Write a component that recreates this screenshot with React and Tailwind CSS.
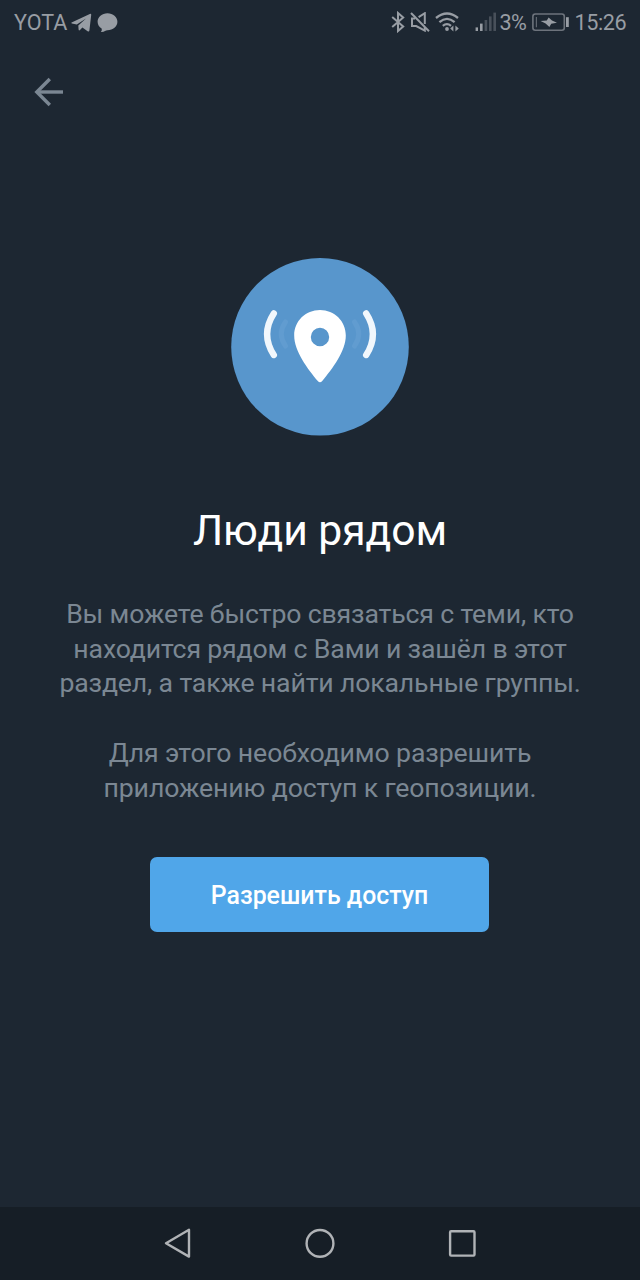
import React from 'react';

const TelegramIcon = () => (
  <svg width="21" height="20" viewBox="0 0 21 20" fill="currentColor">
    <path d="M0.6 9.4 L18.8 1 Q20.4 0.4 20.2 2 L18.4 17.6 Q18 19.2 16.6 18.2 L11.4 14.4 L9 17 Q7.8 18 7.6 16.4 L7.3 12.4 L15 5.6 L5.8 11.6 L0.8 10.4 Q-0.2 9.8 0.6 9.4 Z" />
  </svg>
);

const ChatIcon = () => (
  <svg width="21" height="20" viewBox="0 0 21 20" fill="currentColor">
    <path d="M10.5 0.3 C16 0.3 20.4 4 20.4 8.8 C20.4 13.6 16 17.2 10.5 17.2 C9.6 17.2 8.8 17.5 8 18 C6.9 18.8 5.6 19.2 3.8 19 C4.8 18.2 5 17 4.6 15.6 C2.2 14 0.6 11.7 0.6 8.8 C0.6 4 5 0.3 10.5 0.3 Z" />
  </svg>
);

const BluetoothIcon = () => (
  <svg width="14" height="22" viewBox="0 0 14 22" fill="none" stroke="currentColor" strokeWidth="2">
    <path d="M1.2 6 L12.2 15.4 L7 20 V2 L12.2 6.6 L1.2 16" />
  </svg>
);

const MuteIcon = () => (
  <svg width="20" height="20" viewBox="0 0 20 20" fill="none" stroke="currentColor" strokeWidth="2">
    <path d="M1 1 L19 19.2" />
    <path d="M5 6.4 H2 V14 H6.2 L14.8 18.6 V15" />
    <path d="M8.6 5.2 L14.8 1.2 V12" />
  </svg>
);

const WifiIcon = () => (
  <svg width="25" height="20" viewBox="0 0 25 20" fill="none" stroke="currentColor" strokeWidth="2.3">
    <path d="M1 6 Q12 -3 23 6" />
    <path d="M4.4 10.2 Q12 3.6 19.6 10.2" />
    <path d="M7.8 13.8 Q12 10.4 16 13.8" />
    <circle cx="12" cy="17" r="1.9" fill="currentColor" stroke="none" />
    <path d="M18.4 13.6 V19.4 L15.2 16.5 Z M20.4 13.6 V19.4 L23.8 16.5 Z" fill="currentColor" stroke="none" />
  </svg>
);

const SignalIcon = () => (
  <svg width="22" height="20" viewBox="0 0 22 20" fill="currentColor">
    <rect x="0.6" y="15.4" width="2.4" height="3.6" />
    <rect x="5" y="11.6" width="2.6" height="7.4" />
    <g opacity="0.35">
      <rect x="9.6" y="8" width="2.6" height="11" />
      <rect x="14" y="4.4" width="2.6" height="14.6" />
      <rect x="18.4" y="0.6" width="2.6" height="18.4" />
    </g>
  </svg>
);

const BatteryIcon = () => (
  <svg width="37" height="19" viewBox="0 0 37 19" fill="none">
    <rect x="0.9" y="1" width="31.4" height="16.2" rx="2.4" stroke="currentColor" strokeWidth="1.6" opacity="0.65" />
    <path d="M4.4 4 V14.2" stroke="currentColor" strokeWidth="1.2" opacity="0.55" />
    <path d="M34 4.2 H36.8 V14 H34 Z" fill="currentColor" />
    <path d="M8.6 8 L14.8 7.4 L16.6 4.4 L20 7.6 L25 9.8 L19.2 10.8 L17.4 14 L13.6 10.6 Z" fill="currentColor" />
  </svg>
);

function StatusBar() {
  return (
    <header className="flex h-11 items-center justify-between pl-3.5 pr-[13.5px] text-[21.6px] leading-none text-[#989da4]">
      <div className="flex items-center">
        <span className="w-[57px] pt-px">YOTA</span>
        <div className="pt-px"><TelegramIcon /></div>
        <div className="ml-[5px] pt-px"><ChatIcon /></div>
      </div>
      <div className="flex items-center">
        <BluetoothIcon />
        <div className="ml-[5px]"><MuteIcon /></div>
        <div className="ml-[5px]"><WifiIcon /></div>
        <div className="ml-[15px]"><SignalIcon /></div>
        <span className="ml-[3px] w-8 pt-px tracking-[-0.7px]">3%</span>
        <BatteryIcon />
        <span className="ml-1.5 w-[52px] pt-px tracking-[-0.4px]">15:26</span>
      </div>
    </header>
  );
}

function NearbyIcon() {
  return (
    <svg className="size-[178px]" viewBox="0 0 178 178" fill="none">
      <circle cx="89" cy="88.8" r="88.8" fill="#5896cc" />
      <g stroke="#6aa2d4" strokeWidth="5" strokeLinecap="round" opacity="0.5">
        <path d="M54.5 64 Q46 76 54.5 88" />
        <path d="M123.5 64 Q132 76 123.5 88" />
      </g>
      <g stroke="#f1f7fc" strokeWidth="6.4" strokeLinecap="round">
        <path d="M42.8 55.4 Q29.4 76 42.8 97" />
        <path d="M135.2 55.4 Q148.6 76 135.2 97" />
      </g>
      <path
        fill="#fff"
        fillRule="evenodd"
        d="M89 52 C103.4 52 114.8 63.2 114.8 77.4 C114.8 93 101.4 110.6 91.2 123 Q89 125.6 86.8 123 C76.6 110.6 63.2 93 63.2 77.4 C63.2 63.2 74.6 52 89 52 Z M89 69.8 A9.2 9.2 0 1 0 89 88.2 A9.2 9.2 0 1 0 89 69.8 Z"
      />
    </svg>
  );
}

function NavigationBar() {
  return (
    <nav className="flex h-[73px] items-center justify-between bg-[#161e26] px-[163px] pb-px text-[#b0b3b6]">
      <button aria-label="Назад">
        <svg width="30" height="32" viewBox="0 0 30 32" fill="none" stroke="currentColor" strokeWidth="2.4" strokeLinejoin="round">
          <path d="M26 2.8 V29.6 L3 16.2 Z" />
        </svg>
      </button>
      <button aria-label="Домой">
        <svg width="32" height="32" viewBox="0 0 32 32" fill="none" stroke="currentColor" strokeWidth="2.4">
          <circle cx="16" cy="16.4" r="13.4" />
        </svg>
      </button>
      <button aria-label="Недавние">
        <svg width="30" height="32" viewBox="0 0 30 32" fill="none" stroke="currentColor" strokeWidth="2.4">
          <rect x="3.1" y="4.2" width="24.4" height="24.4" rx="1" />
        </svg>
      </button>
    </nav>
  );
}

export default function App() {
  return (
    <div className="flex h-[1280px] w-[640px] flex-col bg-[#1d2732] font-['Roboto',sans-serif]">
      <StatusBar />

      <div className="flex h-[98px] items-center pb-0.5 pl-[34px] text-[#7b8793]">
        <button aria-label="Назад">
          <svg width="30" height="30" viewBox="0 0 30 30" fill="none" stroke="currentColor" strokeWidth="3.4">
            <path d="M29 15 H3" />
            <path d="M15.8 2 L2.8 15 L15.8 28" />
          </svg>
        </button>
      </div>

      <main className="flex flex-1 flex-col items-center pt-[116px] text-center">
        <NearbyIcon />
        <h1 className="mt-[69px] text-[42.67px] leading-[50px] tracking-[-0.05px] text-white">Люди рядом</h1>
        <div className="mt-[42px] space-y-[34.7px] text-[26.67px] leading-[34.7px] tracking-[-0.16px] text-[#7b8793]">
          <p>
            Вы можете быстро связаться с теми, кто<br />
            находится рядом с Вами и зашёл в этот<br />
            раздел, а также найти локальные группы.
          </p>
          <p className="tracking-[-0.12px]">
            Для этого необходимо разрешить<br />
            приложению доступ к геопозиции.
          </p>
        </div>
        <button className="mt-[51.5px] mr-px h-[75px] w-[339px] rounded-[7px] bg-[#50a6e9] pt-[3px] text-[24.9px] font-medium text-white">
          Разрешить доступ
        </button>
      </main>

      <NavigationBar />
    </div>
  );
}
